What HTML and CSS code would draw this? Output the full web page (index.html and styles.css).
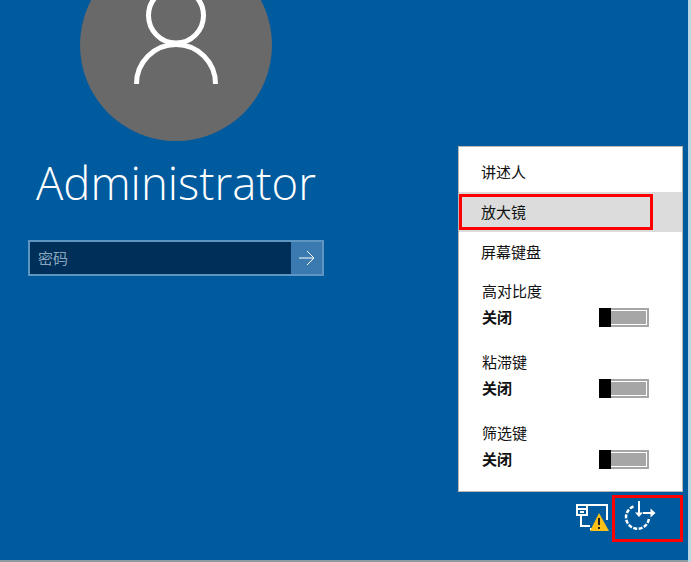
FILE: index.html
```html
<!DOCTYPE html>
<html lang="zh-CN">
<head>
<meta charset="utf-8">
<title>登录</title>
<link rel="stylesheet" href="styles.css">
</head>
<body>
<main class="screen">
  <section class="login">
    <div class="avatar">
      <svg class="avatar-icon" width="84" height="84" viewBox="0 0 84 84"><circle cx="42" cy="15.500" r="27.500" fill="none" stroke="#fff" stroke-width="5"/><path d="M2.500 84A39.500 39.500 0 0 1 81.500 84" fill="none" stroke="#fff" stroke-width="5"/></svg>
    </div>
    <h1 class="username">Administrator</h1>
    <div class="password">
      <div class="password-field">密码</div>
      <div class="password-go">
        <svg width="16" height="16" viewBox="0 0 16 16"><path d="M0 8H15M8 1L15 8L8 15" fill="none" stroke="#fff" stroke-width="1"/></svg>
      </div>
    </div>
  </section>
  <section class="side">
    <div class="menu">
      <div class="item">讲述人</div>
      <div class="item item-active"><span class="mark"></span>放大镜</div>
      <div class="item">屏幕键盘</div>
      <div class="toggle-item">
        <div class="toggle-name">高对比度</div>
        <div class="toggle-row"><b class="state">关闭</b><span class="switch"><span class="thumb"></span></span></div>
      </div>
      <div class="toggle-item">
        <div class="toggle-name">粘滞键</div>
        <div class="toggle-row"><b class="state">关闭</b><span class="switch"><span class="thumb"></span></span></div>
      </div>
      <div class="toggle-item">
        <div class="toggle-name">筛选键</div>
        <div class="toggle-row"><b class="state">关闭</b><span class="switch"><span class="thumb"></span></span></div>
      </div>
    </div>
    <div class="tray">
      <svg class="net" width="36" height="30" viewBox="0 0 36 30">
        <path d="M11 3H31V18M1 3H11V13H1ZM1 7H11M4 10H8M5 13V24H14M14 27H21" fill="none" stroke="#fff" stroke-width="2"/>
        <path d="M23 11L33 29H14Z" fill="#fcc016"/>
        <path d="M23 16V23M23 25V27" stroke="#222" stroke-width="2"/>
      </svg>
      <div class="ease">
        <svg width="50" height="36" viewBox="0 0 50 36">
          <path d="M18.500 8.500A11.500 11.500 0 1 0 34 20" fill="none" stroke="#fff" stroke-width="2.500" stroke-dasharray="4 1.500"/>
          <path d="M24 3V15M28 15H37" fill="none" stroke="#fff" stroke-width="2"/>
          <path d="M20 14.500H28L24 19ZM35.500 10.500L40.500 15L35.500 19.500Z" fill="#fff"/>
        </svg>
      </div>
    </div>
  </section>
</main>
</body>
</html>
```
FILE: styles.css
```css
html, body {
  margin: 0;
  padding: 0;
  height: 100%;
  overflow: hidden;
  background: #b9d7e2;
}
body {
  font-family: "Noto Sans CJK SC", "Liberation Sans", sans-serif;
}
.screen {
  width: 688px;
  height: 562px;
  box-sizing: border-box;
  background: #005a9e;
  border-bottom: 2px solid #8f9ba2;
  display: flex;
  overflow: hidden;
}
.login {
  width: 352px;
  flex: none;
  padding-left: 28px;
  box-sizing: border-box;
  margin-right: 106px;
}
.avatar {
  width: 192px;
  height: 192px;
  margin: -51px 0 0 52px;
  border-radius: 50%;
  background: #696969;
  overflow: hidden;
  display: flex;
  justify-content: center;
}
.avatar-icon {
  flex: none;
  margin-top: 51px;
}
.username {
  margin: 9px 0 0 8px;
  font-family: "Open Sans", "Liberation Sans", sans-serif;
  font-weight: 300;
  font-size: 45.500px;
  line-height: 64px;
  color: #fff;
  letter-spacing: 0;
}
.password {
  width: 296px;
  height: 36px;
  margin-top: 26px;
  box-sizing: border-box;
  border: 2px solid #5f95c2;
  display: flex;
}
.password-field {
  flex: 1;
  background: #002f5a;
  color: #8aa6bd;
  font-size: 15px;
  line-height: 32px;
  padding-left: 8px;
}
.password-go {
  width: 31px;
  background: #3a7ab0;
  display: flex;
  align-items: center;
  justify-content: center;
}
.side {
  width: 225px;
  flex: none;
  padding-top: 146px;
}
.menu {
  box-sizing: border-box;
  width: 225px;
  height: 346px;
  background: #fff;
  border: 1px solid #b8b8b8;
  padding-top: 5px;
  color: #111;
  font-size: 15px;
}
.item {
  position: relative;
  height: 40px;
  line-height: 39px;
  padding-left: 22px;
}
.item-active {
  background: #dcdcdc;
}
.mark {
  position: absolute;
  left: 0;
  top: 2px;
  width: 194px;
  height: 36px;
  box-sizing: border-box;
  border: 3px solid #f00;
}
.toggle-item {
  height: 71px;
  padding: 7px 33px 0 23px;
  box-sizing: border-box;
}
.toggle-name {
  line-height: 24px;
}
.toggle-row {
  display: flex;
  justify-content: space-between;
  align-items: center;
  height: 28px;
}
.state {
  font-weight: 700;
  margin-top: -1px;
}
.switch {
  display: block;
  width: 50px;
  height: 19px;
  box-sizing: border-box;
  background: #a6a6a6;
  border: 2px solid #a6a6a6;
  outline: 1px solid #fff;
  outline-offset: -3px;
  position: relative;
}
.thumb {
  position: absolute;
  left: -2px;
  top: -2px;
  width: 12px;
  height: 19px;
  background: #000;
}
.tray {
  display: flex;
  height: 68px;
  margin-top: 3px;
}
.net {
  margin: 7px 0 0 118px;
  flex: none;
}
.ease {
  width: 71px;
  height: 47px;
  flex: none;
  box-sizing: border-box;
  border: 3px solid #f00;
}
```
